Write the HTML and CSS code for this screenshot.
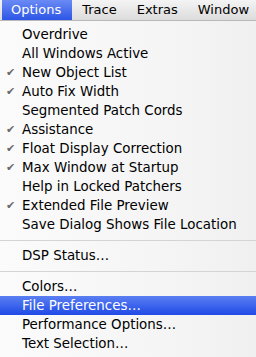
FILE: index.html
```html
<!DOCTYPE html>
<html lang="en">

<head>
  <meta charset="UTF-8">
  <title>Options menu</title>
  <link rel="stylesheet" href="styles.css">
</head>

<body>
  <div class="menubar">
    <span class="title title-active">Options</span>
    <span class="title">Trace</span>
    <span class="title">Extras</span>
    <span class="title">Window</span>
  </div>
  <ul class="menu">
    <li class="item">Overdrive</li>
    <li class="item">All Windows Active</li>
    <li class="item checked">New Object List</li>
    <li class="item checked">Auto Fix Width</li>
    <li class="item">Segmented Patch Cords</li>
    <li class="item checked">Assistance</li>
    <li class="item checked">Float Display Correction</li>
    <li class="item checked">Max Window at Startup</li>
    <li class="item">Help in Locked Patchers</li>
    <li class="item checked">Extended File Preview</li>
    <li class="item">Save Dialog Shows File Location</li>
    <li class="sep"></li>
    <li class="item">DSP Status…</li>
    <li class="sep"></li>
    <li class="item">Colors…</li>
    <li class="item selected">File Preferences…</li>
    <li class="item">Performance Options…</li>
    <li class="item">Text Selection…</li>
  </ul>
</body>

</html>
```

FILE: styles.css
```css
html,
body {
  margin: 0;
  padding: 0;
}

body {
  width: 256px;
  height: 357px;
  overflow: hidden;
  background: #f8f8f8;
  font-family: "DejaVu Sans", "Liberation Sans", sans-serif;
  font-size: 13px;
  color: #000;
}

.menubar {
  display: flex;
  height: 21px;
  background: linear-gradient(#f4f4f4, #dcdcdc);
  border-bottom: 1px solid #b8b8b8;
  box-sizing: border-box;
}

.title {
  display: flex;
  align-items: center;
  padding: 0 10px;
  line-height: 20px;
}

.title-active {
  padding: 0 11px 0 9px;
  margin-left: 2px;
  color: #fff;
  background: linear-gradient(#6a8bf5, #2d55e6);
}

.menu {
  list-style: none;
  margin: 0;
  padding: 4px 0 0;
  background: linear-gradient(90deg, #fbfbfb, #f4f4f4 70%, #f0f0f0);
  height: 336px;
  font-size: 13.4px;
}

.item {
  position: relative;
  height: 19px;
  line-height: 19px;
  padding-left: 22px;
  white-space: nowrap;
}

.checked::before {
  content: "\2714";
  position: absolute;
  left: 6px;
  top: 0;
  font-size: 11px;
  color: #6a6a6a;
}

.selected {
  color: #fff;
  background: linear-gradient(#5b7ff2, #1f4ae6);
}

.sep {
  height: 12px;
  display: flex;
  align-items: center;
}

.sep::after {
  content: "";
  flex: 1;
  height: 1px;
  background: #d4d4d4;
}
```
